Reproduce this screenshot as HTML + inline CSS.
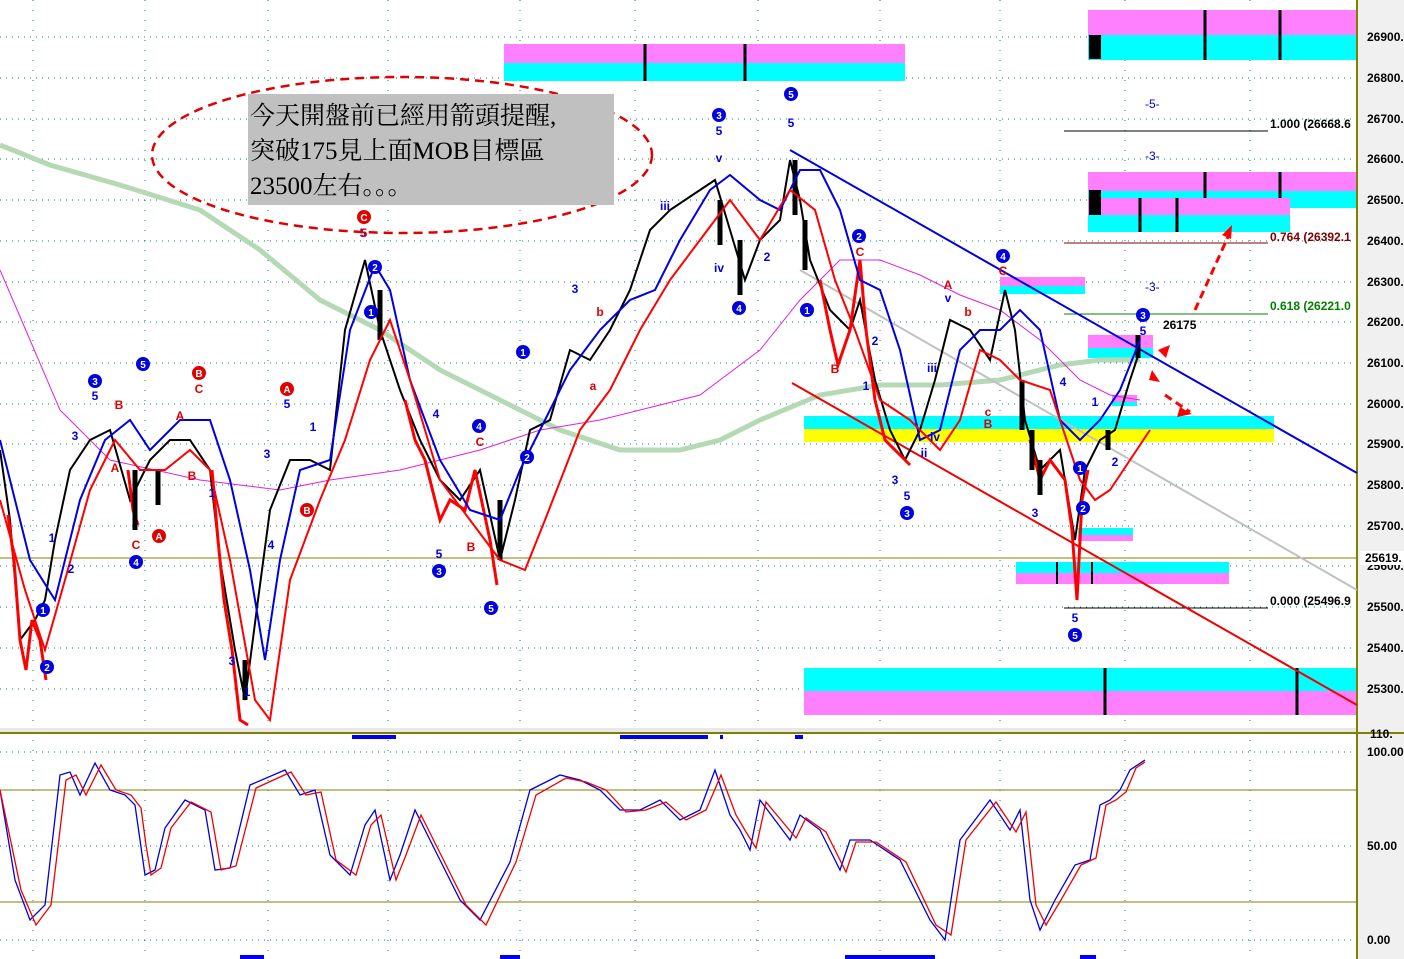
<!DOCTYPE html>
<html><head><meta charset="utf-8"><style>
html,body{margin:0;padding:0;background:#fff}
svg{display:block}
text{font-family:"Liberation Sans",sans-serif}
</style></head><body>
<svg width="1404" height="959" viewBox="0 0 1404 959" xmlns="http://www.w3.org/2000/svg">
<rect width="1404" height="959" fill="#fff"/>
<rect x="1358" y="0" width="46" height="959" fill="#f0f0f0"/>
<line x1="1357" y1="0" x2="1357" y2="959" stroke="#808000" stroke-width="2"/>
<g stroke="#008080" stroke-width="1" stroke-dasharray="1,5">
<line x1="0" y1="37" x2="1356" y2="37"/><line x1="0" y1="78" x2="1356" y2="78"/><line x1="0" y1="119" x2="1356" y2="119"/><line x1="0" y1="159" x2="1356" y2="159"/><line x1="0" y1="200" x2="1356" y2="200"/><line x1="0" y1="241" x2="1356" y2="241"/><line x1="0" y1="282" x2="1356" y2="282"/><line x1="0" y1="322" x2="1356" y2="322"/><line x1="0" y1="363" x2="1356" y2="363"/><line x1="0" y1="404" x2="1356" y2="404"/><line x1="0" y1="444" x2="1356" y2="444"/><line x1="0" y1="485" x2="1356" y2="485"/><line x1="0" y1="526" x2="1356" y2="526"/><line x1="0" y1="566" x2="1356" y2="566"/><line x1="0" y1="607" x2="1356" y2="607"/><line x1="0" y1="648" x2="1356" y2="648"/><line x1="0" y1="689" x2="1356" y2="689"/>
<line x1="0" y1="752" x2="1356" y2="752"/><line x1="0" y1="846" x2="1356" y2="846"/><line x1="0" y1="940" x2="1356" y2="940"/>
</g>
<g stroke="#008080" stroke-width="1" stroke-dasharray="1,9">
<line x1="33" y1="0" x2="33" y2="959"/><line x1="145" y1="0" x2="145" y2="959"/><line x1="268" y1="0" x2="268" y2="959"/><line x1="388" y1="0" x2="388" y2="959"/><line x1="520" y1="0" x2="520" y2="959"/><line x1="635" y1="0" x2="635" y2="959"/><line x1="758" y1="0" x2="758" y2="959"/><line x1="880" y1="0" x2="880" y2="959"/><line x1="1000" y1="0" x2="1000" y2="959"/><line x1="1125" y1="0" x2="1125" y2="959"/><line x1="1250" y1="0" x2="1250" y2="959"/>
</g>
<rect x="504" y="44" width="401" height="19" fill="#ff80ff"/><rect x="504" y="63" width="401" height="18" fill="#00ffff"/>
<line x1="645" y1="44" x2="645" y2="81" stroke="#000" stroke-width="3"/><line x1="745" y1="44" x2="745" y2="81" stroke="#000" stroke-width="3"/>
<rect x="1088" y="10" width="268" height="25" fill="#ff80ff"/><rect x="1088" y="35" width="268" height="25" fill="#00ffff"/>
<rect x="1089" y="35" width="12" height="24" fill="#000"/>
<line x1="1205" y1="10" x2="1205" y2="60" stroke="#000" stroke-width="3"/><line x1="1280" y1="10" x2="1280" y2="60" stroke="#000" stroke-width="3"/>
<rect x="1088" y="172" width="268" height="19" fill="#ff80ff"/><rect x="1088" y="191" width="268" height="17" fill="#00ffff"/>
<rect x="1088" y="198" width="202" height="17" fill="#ff80ff"/><rect x="1088" y="215" width="202" height="17" fill="#00ffff"/>
<rect x="1089" y="190" width="12" height="25" fill="#000"/>
<line x1="1205" y1="172" x2="1205" y2="198" stroke="#000" stroke-width="3"/><line x1="1280" y1="172" x2="1280" y2="198" stroke="#000" stroke-width="3"/>
<line x1="1140" y1="198" x2="1140" y2="232" stroke="#000" stroke-width="3"/><line x1="1177" y1="198" x2="1177" y2="232" stroke="#000" stroke-width="3"/>
<rect x="1000" y="277" width="85" height="9" fill="#ff80ff"/><rect x="1000" y="286" width="85" height="8" fill="#00ffff"/>
<rect x="1088" y="335" width="65" height="13" fill="#ff80ff"/><rect x="1088" y="348" width="65" height="10" fill="#00ffff"/>
<rect x="1112" y="395" width="25" height="7" fill="#ff80ff"/><rect x="1112" y="402" width="25" height="4" fill="#00ffff"/>
<rect x="804" y="416" width="470" height="13" fill="#00ffff"/><rect x="804" y="429" width="470" height="13" fill="#ffff00"/>
<rect x="1078" y="528" width="55" height="7" fill="#00ffff"/><rect x="1078" y="535" width="55" height="6" fill="#ff80ff"/>
<rect x="1016" y="562" width="213" height="11" fill="#00ffff"/><rect x="1016" y="573" width="213" height="11" fill="#ff80ff"/>
<line x1="1057" y1="562" x2="1057" y2="584" stroke="#000" stroke-width="2"/><line x1="1092" y1="562" x2="1092" y2="584" stroke="#000" stroke-width="2"/>
<rect x="804" y="668" width="552" height="23" fill="#00ffff"/><rect x="804" y="691" width="552" height="24" fill="#ff80ff"/>
<line x1="1105" y1="668" x2="1105" y2="715" stroke="#000" stroke-width="3"/><line x1="1297" y1="668" x2="1297" y2="715" stroke="#000" stroke-width="3"/>
<line x1="1064" y1="131" x2="1268" y2="131" stroke="#000"/>
<line x1="1064" y1="243" x2="1268" y2="243" stroke="#800000"/>
<line x1="1064" y1="314" x2="1268" y2="314" stroke="#008000"/>
<line x1="1064" y1="608" x2="1268" y2="608" stroke="#000"/>
<line x1="0" y1="558" x2="1356" y2="558" stroke="#808000"/>
<text x="1270" y="128" font-size="12" font-weight="bold" fill="#000">1.000 (26668.6</text>
<text x="1270" y="241" font-size="12" font-weight="bold" fill="#800000">0.764 (26392.1</text>
<text x="1270" y="310" font-size="12" font-weight="bold" fill="#008000">0.618 (26221.0</text>
<text x="1270" y="605" font-size="12" font-weight="bold" fill="#000">0.000 (25496.9</text>
<text x="1145" y="108" font-size="12" fill="#00c">-5-</text>
<text x="1145" y="160" font-size="12" fill="#00c">-3-</text>
<text x="1145" y="291" font-size="12" fill="#00c">-3-</text>
<text x="1163" y="329" font-size="12" font-weight="bold" fill="#000">26175</text>
<polyline fill="none" stroke="#b5d8b5" stroke-width="5" points="0,145 50,165 120,185 200,210 260,250 320,300 380,330 440,370 500,400 560,430 620,450 680,450 720,440 760,420 820,395 880,385 940,385 1000,380 1060,365 1100,360 1140,360"/>
<polyline fill="none" stroke="#e020e0" stroke-width="1" points="0,270 30,340 60,410 110,460 200,480 280,490 330,480 400,470 480,450 540,430 600,420 660,405 700,395 760,350 800,300 840,260 880,260 920,275 960,295 1000,310 1040,340 1080,380 1110,395 1140,400"/>
<line x1="790" y1="150" x2="1357" y2="473" stroke="#0000e0" stroke-width="2"/>
<line x1="792" y1="383" x2="1357" y2="705" stroke="#f00000" stroke-width="2"/>
<line x1="800" y1="270" x2="1357" y2="590" stroke="#c0c0c0" stroke-width="2"/>
<!-- price as candle-like thick line -->
<polyline fill="none" stroke="#000" stroke-width="2" points="0,450 10,520 20,640 35,620 45,600 55,540 70,470 90,440 110,430 130,500 150,460 170,440 190,440 210,470 220,560 235,650 245,700 258,600 270,510 290,460 310,460 330,470 345,330 365,260 380,330 400,390 420,440 440,480 460,500 480,470 500,560 515,500 530,430 550,420 570,350 590,360 610,330 630,290 650,230 670,210 700,190 715,180 730,230 745,280 760,240 780,220 790,160 800,200 810,260 830,310 850,330 860,300 875,380 890,430 905,460 920,430 935,380 950,320 970,330 990,360 1005,290 1015,330 1025,420 1040,470 1060,450 1075,540 1085,470 1100,440 1115,430 1130,380 1140,350"/>
<g fill="none" stroke="#f00" stroke-width="3">
<polyline points="8,515 14,560 20,640 26,670 32,620 40,640 46,680"/>
<polyline points="212,470 218,540 224,600 232,650 240,720 248,725"/>
<polyline points="405,400 415,440 425,460 440,520 450,500 465,510 475,470 490,540 497,585"/>
<polyline points="820,280 830,330 838,365 850,330 860,260 866,330 875,400 885,440 900,455 910,465"/>
<polyline points="1030,440 1040,480 1050,460 1065,480 1072,530 1077,600 1082,500 1088,470"/>
<polyline points="128,470 133,510 138,525"/>
</g>
<g stroke="#000" stroke-width="5">
<line x1="135" y1="470" x2="135" y2="530"/><line x1="158" y1="470" x2="158" y2="505"/><line x1="245" y1="660" x2="245" y2="700"/><line x1="380" y1="290" x2="380" y2="340"/><line x1="500" y1="500" x2="500" y2="560"/><line x1="720" y1="200" x2="720" y2="245"/><line x1="740" y1="240" x2="740" y2="295"/><line x1="795" y1="160" x2="795" y2="215"/><line x1="805" y1="220" x2="805" y2="270"/><line x1="1022" y1="380" x2="1022" y2="430"/><line x1="1032" y1="430" x2="1032" y2="470"/><line x1="1040" y1="460" x2="1040" y2="495"/><line x1="1108" y1="430" x2="1108" y2="450"/><line x1="1138" y1="335" x2="1138" y2="358"/>
</g>
<polyline fill="none" stroke="#0000e0" stroke-width="2" points="0,440 30,560 55,600 80,500 105,440 130,420 150,450 180,420 210,420 230,480 250,570 265,660 280,560 300,470 330,460 350,330 375,265 390,290 410,380 440,460 470,510 500,520 520,470 540,430 570,370 600,330 630,300 655,290 680,240 710,190 730,175 760,200 780,210 800,170 820,170 840,210 860,280 880,290 900,350 920,440 940,430 960,350 980,330 1000,330 1020,310 1040,330 1060,420 1080,440 1100,420 1120,390 1140,340"/>
<polyline fill="none" stroke="#f00" stroke-width="2" points="0,500 25,590 45,650 65,580 90,490 115,440 140,470 165,470 190,450 210,470 230,560 255,700 270,720 290,580 320,500 345,440 370,360 390,320 410,380 440,480 470,520 500,560 525,570 545,520 580,430 610,390 640,330 670,280 700,240 730,200 760,240 790,190 815,210 835,280 855,330 880,400 910,420 940,450 960,420 980,350 1000,360 1020,380 1050,390 1080,480 1095,500 1110,490 1130,460 1150,430"/>
<g stroke="#f00" stroke-width="3" stroke-dasharray="8,5" fill="none"><line x1="1195" y1="310" x2="1232" y2="228"/><line x1="1165" y1="395" x2="1190" y2="412"/></g>
<path d="M1232,225 l-10,10 l9,4z M1170,345 l-12,5 l8,8z M1192,414 l-12,-7 l-3,10z M1160,382 l-8,-12 l-3,10z" fill="#f00"/>
<g font-size="12" font-weight="bold" text-anchor="middle">
<g fill="#0000e0"><circle cx="719" cy="115" r="7"/><circle cx="791" cy="94" r="7"/><circle cx="859" cy="236" r="7"/><circle cx="1003" cy="256" r="7"/><circle cx="1143" cy="315" r="7"/><circle cx="807" cy="310" r="7"/><circle cx="739" cy="308" r="7"/><circle cx="523" cy="352" r="7"/><circle cx="479" cy="426" r="7"/><circle cx="527" cy="457" r="7"/><circle cx="439" cy="571" r="7"/><circle cx="491" cy="608" r="7"/><circle cx="907" cy="513" r="7"/><circle cx="1075" cy="635" r="7"/><circle cx="1080" cy="468" r="7"/><circle cx="1083" cy="508" r="7"/><circle cx="95" cy="381" r="7"/><circle cx="143" cy="364" r="7"/><circle cx="136" cy="562" r="7"/><circle cx="47" cy="667" r="7"/><circle cx="43" cy="610" r="7"/><circle cx="375" cy="267" r="7"/><circle cx="371" cy="312" r="7"/></g>
<g fill="#e00000"><circle cx="364" cy="217" r="7"/><circle cx="287" cy="389" r="7"/><circle cx="199" cy="373" r="7"/><circle cx="159" cy="536" r="7"/><circle cx="307" cy="510" r="7"/></g>
<g fill="#fff" font-size="10"><text x="719" y="119">3</text><text x="791" y="98">5</text><text x="859" y="240">2</text><text x="1003" y="260">4</text><text x="1143" y="319">3</text><text x="807" y="314">1</text><text x="739" y="312">4</text><text x="523" y="356">1</text><text x="479" y="430">4</text><text x="527" y="461">2</text><text x="439" y="575">3</text><text x="491" y="612">5</text><text x="907" y="517">3</text><text x="1075" y="639">5</text><text x="1080" y="472">1</text><text x="1083" y="512">2</text><text x="95" y="385">3</text><text x="143" y="368">5</text><text x="136" y="566">4</text><text x="47" y="671">2</text><text x="43" y="614">1</text><text x="375" y="271">2</text><text x="371" y="316">1</text><text x="364" y="221">C</text><text x="287" y="393">A</text><text x="199" y="377">B</text><text x="159" y="540">A</text><text x="307" y="514">B</text></g>
<g fill="#0000e0"><text x="719" y="135">5</text><text x="791" y="127">5</text><text x="719" y="162">v</text><text x="665" y="210">iii</text><text x="719" y="272">iv</text><text x="95" y="400">5</text><text x="75" y="440">3</text><text x="287" y="408">5</text><text x="575" y="293">3</text><text x="363" y="237">5</text><text x="1143" y="335">5</text><text x="1075" y="622">5</text><text x="907" y="500">5</text><text x="895" y="484">3</text><text x="1035" y="517">3</text><text x="1063" y="386">4</text><text x="1095" y="406">1</text><text x="1115" y="466">2</text><text x="948" y="302">v</text><text x="932" y="372">iii</text><text x="935" y="441">iv</text><text x="924" y="457">ii</text><text x="436" y="418">4</text><text x="439" y="558">5</text><text x="267" y="458">3</text><text x="313" y="431">1</text><text x="271" y="549">4</text><text x="232" y="665">3</text><text x="247" y="696">1</text><text x="212" y="497">1</text><text x="52" y="542">1</text><text x="71" y="573">2</text><text x="875" y="345">2</text><text x="866" y="390">1</text><text x="767" y="261">2</text></g>
<g fill="#e00000"><text x="364" y="237">5</text><text x="199" y="393">C</text><text x="180" y="420">A</text><text x="119" y="409">B</text><text x="136" y="549">C</text><text x="480" y="446">C</text><text x="471" y="551">B</text><text x="860" y="256">C</text><text x="835" y="373">B</text><text x="948" y="289">A</text><text x="968" y="316">b</text><text x="988" y="428">B</text><text x="988" y="416">c</text><text x="1003" y="275">C</text><text x="600" y="316">b</text><text x="593" y="390">a</text><text x="115" y="472">A</text><text x="192" y="480">B</text></g>
</g>
<ellipse cx="402" cy="155" rx="250" ry="78" fill="none" stroke="#e00000" stroke-width="2.5" stroke-dasharray="9,6"/>
<rect x="248" y="94" width="366" height="111" fill="#c0c0c0"/>
<text x="250" y="124" font-size="25" fill="#000" style="font-family:'Liberation Serif','Noto Serif CJK SC',serif">今天開盤前已經用箭頭提醒,</text>
<text x="250" y="159" font-size="25" fill="#000" style="font-family:'Liberation Serif','Noto Serif CJK SC',serif">突破175見上面MOB目標區</text>
<text x="250" y="194" font-size="25" fill="#000" style="font-family:'Liberation Serif','Noto Serif CJK SC',serif">23500左右。。。</text>
<rect x="0" y="728" width="1356" height="4" fill="#e8e8e8"/>
<line x1="0" y1="733" x2="1404" y2="733" stroke="#808000" stroke-width="2"/>
<rect x="352" y="735" width="44" height="4" fill="#00e"/><rect x="620" y="735" width="88" height="4" fill="#00e"/><rect x="720" y="735" width="3" height="4" fill="#00e"/><rect x="795" y="735" width="8" height="4" fill="#00e"/>
<rect x="240" y="955" width="24" height="4" fill="#00e"/><rect x="500" y="955" width="20" height="4" fill="#00e"/><rect x="845" y="955" width="90" height="4" fill="#00e"/><rect x="1080" y="955" width="16" height="4" fill="#00e"/>
<line x1="0" y1="790" x2="1356" y2="790" stroke="#808000"/>
<line x1="0" y1="902" x2="1356" y2="902" stroke="#808000"/>
<polyline fill="none" stroke="#0000e0" stroke-width="1.3" points="0,790 15,880 30,920 45,905 60,775 70,772 80,795 95,763 110,790 125,795 135,805 140,840 145,875 155,870 165,828 185,800 205,810 215,870 230,868 250,785 285,770 300,795 315,790 330,855 350,875 365,825 375,810 390,880 400,855 415,810 440,860 460,900 480,920 510,862 530,790 560,775 580,780 600,790 620,810 640,810 660,800 680,820 700,810 715,770 730,815 740,830 750,850 760,800 775,820 790,840 800,815 820,830 840,870 850,840 870,840 900,860 930,920 945,940 960,840 990,800 1010,830 1020,810 1030,900 1040,930 1055,900 1075,865 1090,860 1100,805 1110,800 1120,790 1130,770 1145,760"/>
<polyline fill="none" stroke="#f00000" stroke-width="1.3" points="0,790 21,890 36,925 51,905 66,780 76,775 86,795 101,765 116,790 131,795 141,808 146,845 151,875 161,868 171,828 191,802 211,812 221,870 236,866 256,788 291,772 306,795 321,792 336,860 356,875 371,825 381,815 396,880 406,855 421,815 446,865 466,905 486,925 516,862 536,795 566,778 586,782 606,790 626,812 646,810 666,802 686,820 706,810 721,775 736,815 746,832 756,848 766,802 781,820 796,838 806,818 826,832 846,872 856,842 876,842 906,862 936,925 951,935 966,840 996,802 1016,832 1026,812 1036,905 1046,925 1061,900 1081,865 1096,858 1106,805 1116,800 1126,792 1136,768 1145,762"/>
<g font-size="12" font-weight="bold" fill="#000">
<text x="1367" y="41">26900.</text><text x="1367" y="82">26800.</text><text x="1367" y="123">26700.</text><text x="1367" y="163">26600.</text><text x="1367" y="204">26500.</text><text x="1367" y="245">26400.</text><text x="1367" y="286">26300.</text><text x="1367" y="326">26200.</text><text x="1367" y="367">26100.</text><text x="1367" y="408">26000.</text><text x="1367" y="448">25900.</text><text x="1367" y="489">25800.</text><text x="1367" y="530">25700.</text><text x="1367" y="570">25600.</text><text x="1367" y="611">25500.</text><text x="1367" y="652">25400.</text><text x="1367" y="693">25300.</text>
<text x="1367" y="756">100.00</text><text x="1367" y="850">50.00</text><text x="1367" y="944">0.00</text><text x="1370" y="738">110.</text>
</g>
<rect x="1360" y="551" width="44" height="14" fill="#fff"/>
<text x="1365" y="562" font-size="12" font-weight="bold" fill="#000">25619.</text>
</svg>
</body></html>
